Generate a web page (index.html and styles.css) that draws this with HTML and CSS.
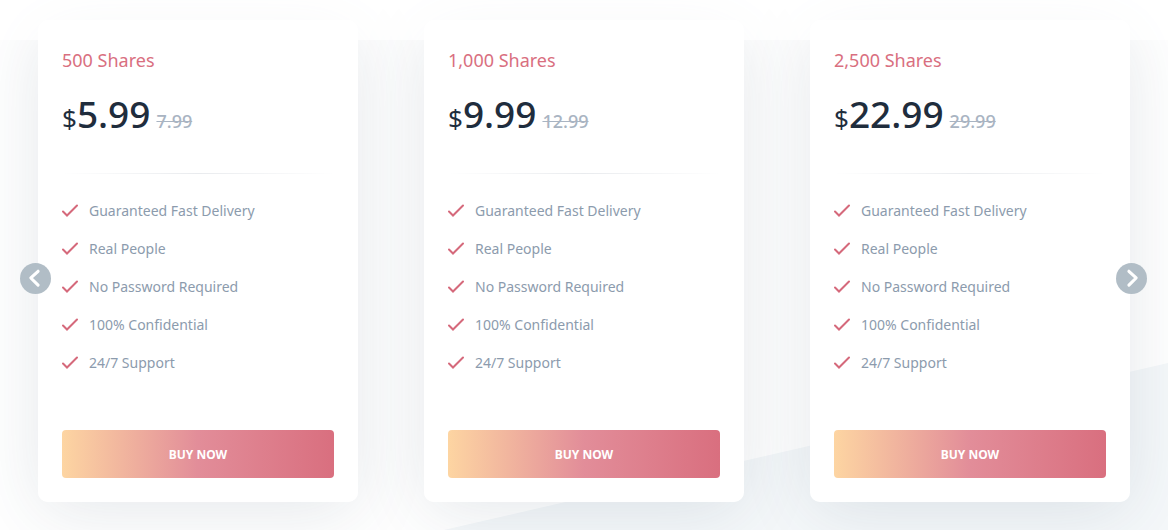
FILE: index.html
```html
<!DOCTYPE html>
<html lang="en">
<head>
<meta charset="UTF-8">
<meta name="viewport" content="width=device-width, initial-scale=1.0">
<title>Buy Shares</title>
<link rel="stylesheet" href="styles.css">
</head>
<body>
<svg class="symbols" aria-hidden="true">
    <symbol id="check" viewBox="0 0 16 14">
        <path d="M1 7.5 L5 11.5 L15 1.5" fill="none" stroke="currentColor" stroke-width="2" stroke-linecap="round" stroke-linejoin="miter"/>
    </symbol>
</svg>

<section class="pricing">
    <div class="plans">
        <article class="plan">
            <h3 class="plan-title">500 Shares</h3>
            <p class="price"><span class="amount"><span class="currency">$</span>5.99</span> <del>7.99</del></p>
            <hr>
            <ul class="features">
                <li><svg><use href="#check"/></svg>Guaranteed Fast Delivery</li>
                <li><svg><use href="#check"/></svg>Real People</li>
                <li><svg><use href="#check"/></svg>No Password Required</li>
                <li><svg><use href="#check"/></svg>100% Confidential</li>
                <li><svg><use href="#check"/></svg>24/7 Support</li>
            </ul>
            <button type="button" class="buy">BUY NOW</button>
        </article>

        <article class="plan">
            <h3 class="plan-title">1,000 Shares</h3>
            <p class="price"><span class="amount"><span class="currency">$</span>9.99</span> <del>12.99</del></p>
            <hr>
            <ul class="features">
                <li><svg><use href="#check"/></svg>Guaranteed Fast Delivery</li>
                <li><svg><use href="#check"/></svg>Real People</li>
                <li><svg><use href="#check"/></svg>No Password Required</li>
                <li><svg><use href="#check"/></svg>100% Confidential</li>
                <li><svg><use href="#check"/></svg>24/7 Support</li>
            </ul>
            <button type="button" class="buy">BUY NOW</button>
        </article>

        <article class="plan">
            <h3 class="plan-title">2,500 Shares</h3>
            <p class="price"><span class="amount"><span class="currency">$</span>22.99</span> <del>29.99</del></p>
            <hr>
            <ul class="features">
                <li><svg><use href="#check"/></svg>Guaranteed Fast Delivery</li>
                <li><svg><use href="#check"/></svg>Real People</li>
                <li><svg><use href="#check"/></svg>No Password Required</li>
                <li><svg><use href="#check"/></svg>100% Confidential</li>
                <li><svg><use href="#check"/></svg>24/7 Support</li>
            </ul>
            <button type="button" class="buy">BUY NOW</button>
        </article>
    </div>

    <button type="button" class="arrow arrow-prev" aria-label="Previous">
        <svg viewBox="0 0 30 30"><path d="M17.5 8 L10.5 14.5 L17.5 21.5" /></svg>
    </button>
    <button type="button" class="arrow arrow-next" aria-label="Next">
        <svg viewBox="0 0 30 30"><path d="M12.5 8 L19.5 14.5 L12.5 21.5" /></svg>
    </button>
</section>
</body>
</html>
```

FILE: styles.css
```css
* {
    box-sizing: border-box;
}

body {
    margin: 0;
    font-family: "Noto Sans", "Open Sans", sans-serif;
    background-color: #fff;
}

.symbols {
    display: none;
}

.pricing {
    position: relative;
    isolation: isolate;
    overflow: hidden;
    padding: 20px 38px 28px;
}

/* slanted tint behind the cards */
.pricing::before {
    content: "";
    position: absolute;
    z-index: -2;
    inset: 0;
    background-color: #f5f8fa;
    clip-path: polygon(38% 100%, 100% 68.5%, 100% 100%);
}

/* lighter band over the top of the card shadows */
.pricing::after {
    content: "";
    position: absolute;
    z-index: -1;
    inset: 0 0 auto;
    height: 40px;
    background-color: rgba(255, 255, 255, 0.7);
}

.plans {
    display: grid;
    grid-template-columns: repeat(3, 1fr);
    gap: 66px;
}

.plan {
    position: relative;
    display: flex;
    flex-direction: column;
    padding: 24px;
    border-radius: 10px;
    background-color: #fff;
}

/* the shadow is its own layer so that it stays under the light band */
.plan::before {
    content: "";
    position: absolute;
    z-index: -2;
    inset: 0;
    border-radius: 10px;
    box-shadow: 0 10px 70px rgba(45, 62, 90, 0.12);
}

.plan-title {
    margin: 0;
    font-size: 18px;
    font-weight: 400;
    line-height: 32px;
    color: #d96f80;
}

.price {
    display: flex;
    align-items: baseline;
    gap: 6px;
    height: 48px;
    margin: 14px 0 35px;
    font-size: 37px;
    font-weight: 500;
    line-height: 48px;
    color: #1f2d3d;
}

.currency {
    font-size: 26px;
    font-weight: 400;
}

.price del {
    font-size: 18px;
    color: #a9b4c2;
}

hr {
    width: 100%;
    height: 1px;
    margin: 0 0 18px;
    border: 0;
    background: linear-gradient(to right, transparent, #e9ebee, transparent);
}

.features {
    margin: 0 0 48px;
    padding: 0;
    list-style: none;
    font-size: 14px;
    line-height: 38px;
    color: #8c9bad;
}

.features li {
    display: flex;
    align-items: center;
    gap: 11px;
}

.features svg {
    width: 16px;
    height: 14px;
    color: #d5697b;
}

.buy {
    height: 48px;
    border: 0;
    border-radius: 4px;
    background: linear-gradient(to right, #fdd5a2, #e28d99 50%, #d96f7f);
    color: #fff;
    font-family: inherit;
    font-size: 12px;
    font-weight: 700;
    cursor: pointer;
}

.arrow {
    position: absolute;
    top: calc(50% + 13px);
    width: 31px;
    height: 31px;
    margin-top: -15px;
    padding: 0;
    border: 0;
    border-radius: 50%;
    background-color: #b1bdc6;
    cursor: pointer;
}

.arrow svg {
    display: block;
    fill: none;
    stroke: #fff;
    stroke-width: 3;
    stroke-linecap: round;
    stroke-linejoin: round;
}

.arrow-prev {
    left: 20px;
}

.arrow-next {
    right: 21px;
}
```
